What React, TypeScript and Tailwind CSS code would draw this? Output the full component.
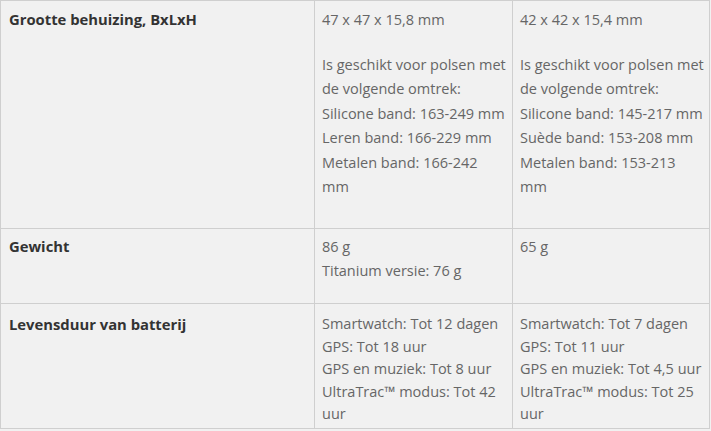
const rows = [
  {
    label: 'Grootte behuizing, BxLxH',
    h: 'h-[228px]',
    lead: 'leading-[24.5px]',
    pad: 'pt-[7px]',
    a: [['47 x 47 x 15,8 mm'], ['Is geschikt voor polsen met de volgende omtrek:', 'Silicone band: 163-249 mm', 'Leren band: 166-229 mm', 'Metalen band: 166-242 mm']],
    b: [['42 x 42 x 15,4 mm'], ['Is geschikt voor polsen met de volgende omtrek:', 'Silicone band: 145-217 mm', 'Suède band: 153-208 mm', 'Metalen band: 153-213 mm']],
  },
  {
    label: 'Gewicht',
    h: 'h-[75px]',
    lead: 'leading-[24px]',
    pad: 'pt-[6px]',
    a: [['86 g', 'Titanium versie: 76 g']],
    b: [['65 g']],
  },
  {
    label: 'Levensduur van batterij',
    h: 'h-[125px]',
    lead: 'leading-[22.5px]',
    pad: 'pt-[9px]',
    a: [['Smartwatch: Tot 12 dagen', 'GPS: Tot 18 uur', 'GPS en muziek: Tot 8 uur', 'UltraTrac™ modus: Tot 42 uur']],
    b: [['Smartwatch: Tot 7 dagen', 'GPS: Tot 11 uur', 'GPS en muziek: Tot 4,5 uur', 'UltraTrac™ modus: Tot 25 uur']],
  },
];

const Value = ({ paras }: { paras: string[][] }) => (
  <div className="flex flex-col gap-[20px]">
    {paras.map((p, i) => (
      <p key={i}>
        {p.map((line, j) => (
          <span key={j} className="block">{line}</span>
        ))}
      </p>
    ))}
  </div>
);

export default function App() {
  return (
    <div className="w-[711px] h-[431px] bg-[#f1f1f1] font-['Open_Sans',sans-serif]">
      <div className="grid grid-cols-[314px_198px_197px] w-[710px] border-l border-t border-[#cfcfcf]">
        {rows.map(r => (
          <div key={r.label} className="contents">
            <div className={`${r.h} ${r.pad} pl-[8px] pr-[7px] border-r border-b border-[#cfcfcf] font-bold text-[#333] text-[14.8px] leading-[22px]`}>
              {r.label}
            </div>
            <div className={`${r.h} ${r.pad} ${r.lead} pl-[7px] pr-[5px] border-r border-b border-[#cfcfcf] text-[#666] text-[14.5px]`}>
              <Value paras={r.a} />
            </div>
            <div className={`${r.h} ${r.pad} ${r.lead} pl-[7px] pr-[5px] border-r border-b border-[#cfcfcf] text-[#666] text-[14.5px]`}>
              <Value paras={r.b} />
            </div>
          </div>
        ))}
      </div>
    </div>
  );
}
